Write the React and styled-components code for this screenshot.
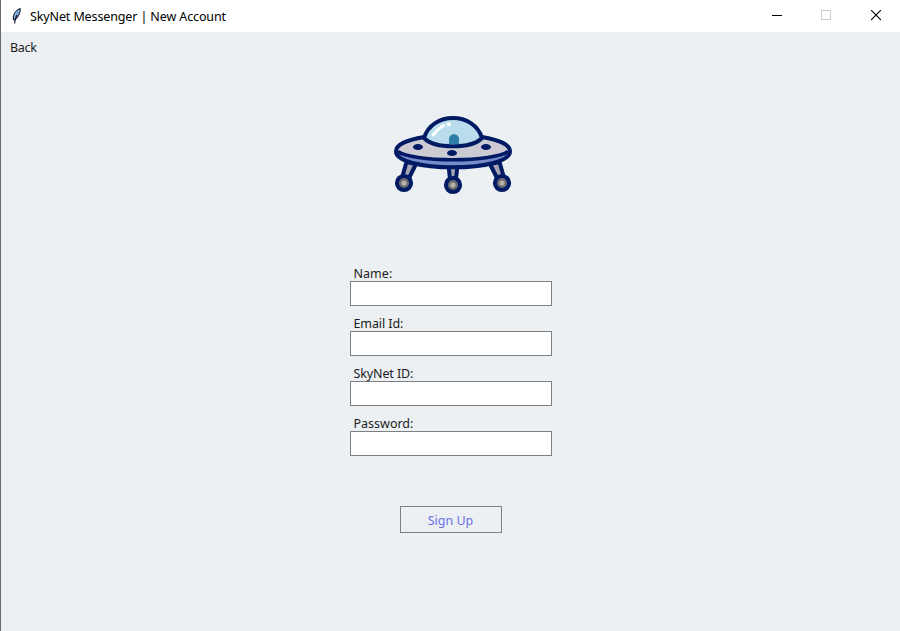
import React from "react";
import styled, { createGlobalStyle } from "styled-components";

const GlobalStyle = createGlobalStyle`
  * { box-sizing: border-box; }
  body { margin: 0; background: #ecf0f3; }
`;

const Window = styled.div`
  width: 900px;
  height: 631px;
  display: flex;
  flex-direction: column;
  background: #ecf0f3;
  border-left: 1px solid #6b6b6d;
  overflow: hidden;
  color: #1c1c22;
  font: 12.5px/16px "Noto Sans", "Open Sans", sans-serif;
`;

const TitleBar = styled.header`
  height: 32px;
  flex: none;
  display: flex;
  align-items: center;
  padding-left: 9px;
  background: #fff;
  color: #000;
`;

const Text = styled.span`
  white-space: nowrap;
  letter-spacing: ${(p) => p.$spacing || 0}px;
`;

const Title = styled(Text)`
  flex: 1;
  margin-left: 8px;
  padding-top: 2px;
`;

const Controls = styled.div`
  display: flex;
  height: 32px;
  margin-right: -1px;
`;

const Control = styled.button`
  width: 50px;
  height: 31px;
  padding: 0 0 0 ${(p) => p.$inset || 0}px;
  border: 0;
  background: transparent;
  display: grid;
  place-items: center;
  color: ${(p) => (p.$muted ? "#cccccc" : "#000")};
`;

const MenuBar = styled.nav`
  height: 32px;
  flex: none;
  padding: 8px 9px;
`;

const Content = styled.main`
  display: flex;
  flex-direction: column;
  align-items: center;
  padding: 50px 0 0 0;
`;

const Logo = styled.svg`
  width: 124px;
  height: 84px;
  margin-left: 5px;
`;

const Form = styled.form`
  width: 202px;
  margin-top: 68px;
  display: flex;
  flex-direction: column;
  align-items: center;
`;

const Field = styled.label`
  width: 202px;
  height: 50px;
  display: flex;
  flex-direction: column;
`;

const Label = styled(Text)`
  height: 15px;
  padding-left: 4px;
`;

const Input = styled.input`
  width: 202px;
  height: 25px;
  padding: 0 4px;
  border: 1px solid #7c8082;
  border-radius: 0;
  outline: 0;
  background: #fff;
  font: inherit;
`;

const SignUp = styled.button`
  width: 102px;
  height: 27px;
  margin-top: 40px;
  padding: 3px 0 0;
  border: 1px solid #7c8082;
  background: transparent;
  color: #6a70e6;
  font: inherit;
`;

const fields = [
  { label: "Name:", type: "text", spacing: 0.05 },
  { label: "Email Id:", type: "email", spacing: -0.1 },
  { label: "SkyNet ID:", type: "text", spacing: -0.12 },
  { label: "Password:", type: "password", spacing: 0 },
];

const Feather = () => (
  <svg width="12" height="18" viewBox="10 6 12 18">
    <path d="M20.300 7.500 C17 8.500 14.200 11 13.200 16 L13.500 19 L15.500 18.500 C18.500 16 20.300 12 20.300 7.500Z" fill="#7ea6d8" stroke="#0b1626" strokeWidth="1" />
    <path d="M17 14 C15.800 16 15.200 19 14.500 22.500" fill="none" stroke="#0b1626" strokeWidth="1.200" />
  </svg>
);

const hull = "M396 151.500 C396 144 407 140 424 137 H482 C499 140 510 144 510 151.500 C510 161 485 167.300 453 167.300 C421 167.300 396 161 396 151.500Z";

const Ufo = () => (
  <Logo viewBox="391 114 124 84" aria-label="SkyNet">
    <g stroke="#001a63" strokeWidth="4" strokeLinejoin="round">
      <path d="M406.500 162 L402.500 176 L409 178 L416 164Z" fill="#a5a5b3" />
      <path d="M499.500 162 L503.500 176 L497 178 L490 164Z" fill="#a5a5b3" />
      <path d="M448.500 165 L450 179 H456 L457.500 165Z" fill="#a5a5b3" />
      <circle cx="404" cy="183" r="7.100" fill="#6c6b70" />
      <circle cx="453" cy="185" r="7.100" fill="#6c6b70" />
      <circle cx="502" cy="183" r="7.100" fill="#6c6b70" />
    </g>
    <path d={hull} fill="#788bca" />
    <path d="M397 150 C398 145 408 141 424 138 H482 C498 141 508 145 509 150 C504 155.500 481 159.500 453 159.500 C425 159.500 402 155.500 397 150Z" fill="#cccbd4" />
    <path d="M398 151.500 C405 156.500 427 159.800 453 159.800 C479 159.800 501 156.500 508 151.500" fill="none" stroke="#001a63" strokeWidth="3.400" />
    <path d={hull} fill="none" stroke="#001a63" strokeWidth="4" />
    <path d="M424 138 C428 125 440 118 453 118 C466 118 478 125 482 138 C476 144 465 146.300 453 146.300 C441 146.300 430 144 424 138Z" fill="#b9ddec" stroke="#001a63" strokeWidth="4" strokeLinejoin="round" />
    <path d="M449 144.500 V139 C449 132.500 459 132.500 459 139 V144.500Z" fill="#2d7fa8" />
    <g fill="none" stroke="#fff" strokeWidth="3" strokeLinecap="round">
      <path d="M433 135 Q437 129.500 443.500 125.500" />
      <path d="M448.700 124.200 L449 124.200" strokeWidth="4" />
    </g>
    <g fill="#001a63">
      <ellipse cx="418" cy="147" rx="5" ry="3" />
      <ellipse cx="452" cy="153" rx="5" ry="3" />
      <ellipse cx="486" cy="147" rx="5" ry="3" />
    </g>
    <g fill="#b8b1aa">
      <circle cx="404" cy="183" r="2.600" />
      <circle cx="453" cy="185" r="2.600" />
      <circle cx="502" cy="183" r="2.600" />
    </g>
  </Logo>
);

export default function App() {
  return (
    <>
      <GlobalStyle />
      <Window>
        <TitleBar>
          <Feather />
          <Title $spacing={-0.12}>SkyNet Messenger | New Account</Title>
          <Controls>
            <Control $inset={2} aria-label="Minimize">
              <svg width="10" height="11"><path d="M0 5.500H10" stroke="currentColor" /></svg>
            </Control>
            <Control $muted aria-label="Maximize">
              <svg width="10" height="11"><rect x=".5" y=".5" width="9" height="9" fill="none" stroke="currentColor" /></svg>
            </Control>
            <Control aria-label="Close">
              <svg width="10" height="11"><path d="M0 0L10 10M10 0L0 10" stroke="currentColor" strokeWidth="1.100" /></svg>
            </Control>
          </Controls>
        </TitleBar>
        <MenuBar><Text $spacing={-0.3}>Back</Text></MenuBar>
        <Content>
          <Ufo />
          <Form>
            {fields.map((f) => (
              <Field key={f.label}>
                <Label $spacing={f.spacing}>{f.label}</Label>
                <Input type={f.type} />
              </Field>
            ))}
            <SignUp type="button"><Text>Sign Up</Text></SignUp>
          </Form>
        </Content>
      </Window>
    </>
  );
}
